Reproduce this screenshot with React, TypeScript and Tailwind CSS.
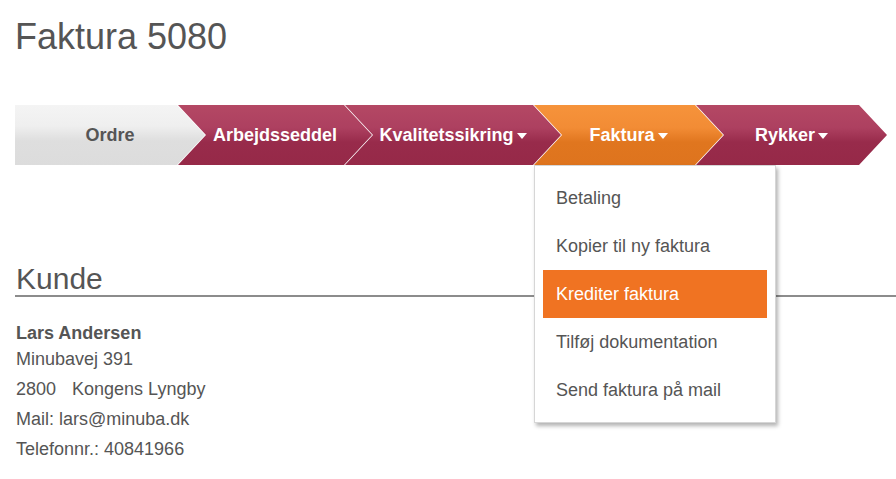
import React from 'react';

type Step = {
  label: string;
  width: string;
  kind: 'done' | 'todo' | 'active';
  caret?: boolean;
  first?: boolean;
};

const steps: Step[] = [
  { label: 'Ordre', width: 'w-[190px]', kind: 'done', first: true },
  { label: 'Arbejdsseddel', width: 'w-[194px]', kind: 'todo' },
  { label: 'Kvalitetssikring', width: 'w-[216px]', kind: 'todo', caret: true },
  { label: 'Faktura', width: 'w-[189px]', kind: 'active', caret: true },
  { label: 'Rykker', width: 'w-[191px]', kind: 'todo', caret: true },
];

const menuItems = ['Betaling', 'Kopier til ny faktura', 'Krediter faktura', 'Tilføj dokumentation', 'Send faktura på mail'];

const Caret: React.FC = () => (
  <svg width="10" height="6" viewBox="0 0 10 6" className="ml-[3px] mt-[1px]">
    <path d="M0 0 L10 0 L5 6 Z" fill="currentColor" />
  </svg>
);

const StepItem: React.FC<{ step: Step }> = ({ step }) => {
  const bg =
    step.kind === 'done'
      ? 'bg-[linear-gradient(#f4f4f4_0%,#efefef_35%,#dedede_60%,#dcdcdc_100%)] text-[#555]'
      : step.kind === 'active'
        ? 'bg-[linear-gradient(#f6933b_0%,#f28c35_38%,#e0761f_62%,#de741e_100%)] text-white'
        : 'bg-[linear-gradient(#b44864_0%,#ad4060_38%,#982b4b_62%,#962948_100%)] text-white';
  const clip = step.first
    ? '[clip-path:polygon(0_0,calc(100%-28px)_0,100%_50%,calc(100%-28px)_100%,0_100%)]'
    : '[clip-path:polygon(0_0,calc(100%-28px)_0,100%_50%,calc(100%-28px)_100%,0_100%,28px_50%)]';
  return (
    <div
      className={`${step.width} ${bg} ${clip} ${step.first ? '' : '-ml-[27px]'} h-[60px] shrink-0 flex items-center justify-center text-[18px] font-bold`}
    >
      {step.label}
      {step.caret && <Caret />}
    </div>
  );
};

export default function App() {
  return (
    <div className="w-[896px] h-[479px] overflow-hidden bg-white text-[#555] font-['Liberation_Sans',Arial,sans-serif]">
      <div className="pl-[15px] pt-[16px]">
        <h1 className="text-[36px] leading-[42px] font-normal">Faktura 5080</h1>
      </div>

      <div className="relative mt-[47px] pl-[15px]">
        <div className="flex">
          {steps.map((s) => (
            <StepItem key={s.label} step={s} />
          ))}
        </div>

        <div className="absolute left-[534px] top-[60px] w-[242px] bg-white border border-[#d6d6d6] shadow-[2px_3px_4px_rgba(0,0,0,0.3)] p-[8px] z-10">
          {menuItems.map((m) => (
            <div
              key={m}
              className={`h-[48px] flex items-center pl-[13px] text-[18px] ${
                m === 'Krediter faktura' ? 'bg-[#f07322] text-white' : 'text-[#555]'
              }`}
            >
              {m}
            </div>
          ))}
        </div>
      </div>

      <div className="mt-[96px] pl-[15px]">
        <h2 className="text-[30px] leading-[35px] font-normal pl-[1px]">Kunde</h2>
        <div className="h-[2px] bg-[#8c8c8c] mt-[-1px]" />
      </div>

      <div className="pl-[16px] pt-[25px] text-[18px] leading-[30px]">
        <div className="font-bold leading-[22px]">Lars Andersen</div>
        <div>Minubavej 391</div>
        <div>
          2800<span className="inline-block w-[16px]" />Kongens Lyngby
        </div>
        <div>Mail: lars@minuba.dk</div>
        <div>Telefonnr.: 40841966</div>
      </div>
    </div>
  );
}
